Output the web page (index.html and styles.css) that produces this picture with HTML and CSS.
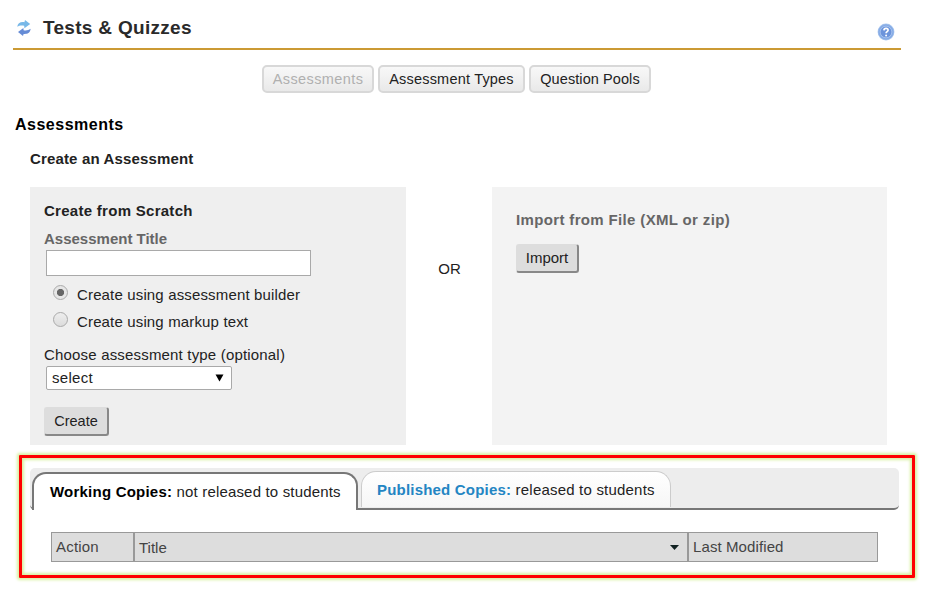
FILE: index.html
```html
<!DOCTYPE html>
<html lang="en">
<head>
<meta charset="utf-8">
<title>Tests &amp; Quizzes</title>
<link rel="stylesheet" href="styles.css">
</head>
<body>
<header class="header">
  <svg class="refresh" width="14" height="16" viewBox="0 0 14 16">
    <path d="M0.3 6.8C.5 3.2 3.5 1.6 7.4 2.2L8 0L13.2 4.1L7.4 8.2L7.2 5.8C4.5 5.2 2.4 5.4 .3 6.8Z" fill="#78b8e8"/>
    <path d="M13.6 8.8C13.3 12.8 10.4 14.4 6.6 13.9L6 16L1 12L6.4 7.9L6.6 10.3C9.2 10.8 11.5 10.4 13.6 8.8Z" fill="#668cd6"/>
  </svg>
  <h1>Tests &amp; Quizzes</h1>
  <svg class="help" width="18" height="18" viewBox="0 0 18 18">
    <circle cx="9" cy="9" r="8.4" fill="#a9c6ee"/>
    <circle cx="9" cy="9" r="7.3" fill="#89aee6" stroke="#7fa6e4" stroke-width=".7"/>
    <circle cx="9" cy="9" r="5.8" fill="#6c94db" stroke="#b8d0f3" stroke-width=".6"/>
    <path d="M6.9 7.4C7 4.7 11.2 4.8 11.1 7.1C11.1 8.6 9.1 8.8 9.1 10.3" fill="none" stroke="#fff" stroke-width="1.7"/>
    <circle cx="9.1" cy="12.4" r="1" fill="#fff"/>
  </svg>
</header>
<nav class="nav">
  <span class="nav-item current">Assessments</span>
  <span class="nav-item types">Assessment Types</span>
  <span class="nav-item pools">Question Pools</span>
</nav>
<h2>Assessments</h2>
<h3 class="create-heading">Create an Assessment</h3>
<main class="columns">
  <section class="panel scratch">
    <h3 class="scratch-heading">Create from Scratch</h3>
    <label class="title-label" for="title">Assessment Title</label>
    <input class="title-input" id="title" type="text">
    <div class="option"><i class="radio checked"></i><span>Create using assessment builder</span></div>
    <div class="option"><i class="radio"></i><span>Create using markup text</span></div>
    <div class="type-label">Choose assessment type (optional)</div>
    <div class="select"><span>select</span><svg width="9" height="8" viewBox="0 0 9 8"><path d="M.5 .5H8.5L4.5 7.5Z" fill="#000"/></svg></div>
    <button class="button create">Create</button>
  </section>
  <div class="or">OR</div>
  <section class="panel import-panel">
    <h3 class="import-heading">Import from File (XML or zip)</h3>
    <button class="button import">Import</button>
  </section>
</main>
<section class="copies">
  <div class="tabs">
    <div class="tab active"><b>Working Copies:</b> not released to students</div>
    <div class="tab other"><b>Published Copies:</b> released to students</div>
  </div>
  <div class="table">
    <div class="cell action">Action</div>
    <div class="cell title"><span>Title</span><svg width="9" height="5" viewBox="0 0 9 5"><path d="M0 0H9L4.5 5Z" fill="#122"/></svg></div>
    <div class="cell modified">Last Modified</div>
  </div>
</section>
</body>
</html>
```

FILE: styles.css
```css
* { box-sizing: border-box; }
body {
  margin: 0;
  width: 932px;
  height: 600px;
  overflow: hidden;
  background: #fff;
  color: #222;
  font: 15px/20px "Liberation Sans", Arial, sans-serif;
}
h1, h2, h3 { margin: 0; font-weight: bold; white-space: nowrap; }
.header {
  display: flex;
  align-items: flex-start;
  width: 888px;
  height: 50px;
  margin-left: 13px;
  padding: 16px 6px 0 4px;
  border-bottom: 2px solid #cb9a34;
}
.refresh { margin: 4px 12px 0 0; }
h1 { font-size: 19px; line-height: 24px; letter-spacing: .3px; color: #2a2a2a; }
.help { margin: 7px 0 0 auto; }
.nav { display: flex; gap: 4px; margin: 15px 0 0 262px; }
.nav-item {
  width: 112px;
  height: 28px;
  border: 2px solid #d8d8d8;
  border-radius: 5px;
  background: linear-gradient(#f8f8f8, #e9e9e9);
  font-size: 14.5px;
  line-height: 25px;
  text-align: center;
  white-space: nowrap;
  letter-spacing: .08px;
}
.nav-item.current { color: #b0b0b0; letter-spacing: .4px; }
.nav-item.types { width: 147px; letter-spacing: .2px; }
.nav-item.pools { width: 122px; }
h2 { margin: 22px 0 0 15px; font-size: 16px; line-height: 20px; letter-spacing: .5px; color: #000; }
.create-heading { margin: 14px 0 0 30px; font-size: 15px; letter-spacing: .15px; }
.columns { display: flex; margin: 18px 0 0 30px; height: 258px; }
.panel { height: 258px; }
.scratch { width: 376px; padding: 14px 0 0 14px; background: #efefef; }
.scratch-heading { font-size: 15px; letter-spacing: .28px; }
.title-label { display: block; margin-top: 8px; font-weight: bold; color: #666; }
.title-input {
  display: block;
  width: 265px;
  height: 26px;
  margin: 1px 0 5px 2px;
  border: 1px solid #a9a9a9;
  background: #fff;
}
.option { display: flex; height: 27px; padding-left: 9px; line-height: 27px; letter-spacing: .15px; }
.radio {
  width: 15px;
  height: 15px;
  margin: 4px 9px 0 0;
  border: 1px solid #aaa;
  border-radius: 50%;
  background: linear-gradient(#eee, #dcdcdc);
}
.radio.checked { background: radial-gradient(circle, #666 0 3.2px, #e6e6e6 4px); }
.type-label { margin-top: 10px; letter-spacing: .18px; }
.select {
  display: flex;
  align-items: center;
  justify-content: space-between;
  width: 186px;
  height: 24px;
  margin: 1px 0 0 2px;
  padding: 0 7px 0 5px;
  border: 1px solid #a9a9a9;
  border-radius: 2px;
  background: #fff;
  letter-spacing: .3px;
}
.button {
  display: block;
  height: 29px;
  padding: 0;
  border: solid;
  border-width: 1px 2px 2px 1px;
  border-color: #ddd #888 #888 #ddd;
  border-radius: 3px;
  background: #ddd;
  color: #222;
  font: 14.5px/24px "Liberation Sans", Arial, sans-serif;
}
.create { width: 65px; margin-top: 17px; }
.or { width: 86px; padding: 72px 0 0 1px; text-align: center; }
.import-panel { width: 395px; padding: 23px 0 0 24px; background: #f3f3f3; }
.import-heading { font-size: 15px; letter-spacing: .35px; color: #666; }
.import { width: 63px; margin-top: 14px; font-size: 15px; }
.copies {
  width: 896px;
  height: 123px;
  margin: 10px 0 0 19px;
  padding: 10px 0 0 8px;
  border: 3px solid #f00;
  border-radius: 1px;
  box-shadow: 0 0 3px 2px #d8f0a2, inset 0 0 3px 2px #d8f0a2;
}
.tabs {
  display: flex;
  align-items: flex-start;
  width: 869px;
  height: 42px;
  padding: 3px 0 0 2px;
  border-bottom: 2px solid #777;
  border-radius: 5px;
  background: #ededed;
}
.tab { white-space: nowrap; letter-spacing: .2px; }
.tab.active {
  width: 326px;
  height: 39px;
  margin-top: 1px;
  height: 38px;
  padding: 8px 0 0 16px;
  border: 2px solid #777;
  border-bottom: 0;
  border-radius: 14px 14px 0 0;
  background: #fff;
  letter-spacing: .17px;
}
.active b { color: #000; letter-spacing: .22px; }
.tab.other {
  width: 310px;
  height: 36px;
  margin-left: 3px;
  padding: 8px 0 0 15px;
  border: 1px solid #ccc;
  border-bottom: 0;
  border-radius: 15px 15px 0 0;
  background: linear-gradient(#fff, #f6f6f6);
}
.other b { color: #2385c3; }
.table {
  display: flex;
  width: 827px;
  height: 30px;
  margin: 22px 0 0 21px;
  border: 1px solid #999;
  background: #ddd;
  color: #444;
}
.cell { height: 28px; padding: 4px 0 0 4px; line-height: 19px; }
.action { width: 83px; border-right: 2px solid #999; letter-spacing: .2px; }
.title {
  display: flex;
  align-items: center;
  justify-content: space-between;
  width: 554px;
  padding: 1px 8px 0 4px;
  border-right: 2px solid #999;
}
.modified { letter-spacing: .1px; }
```
